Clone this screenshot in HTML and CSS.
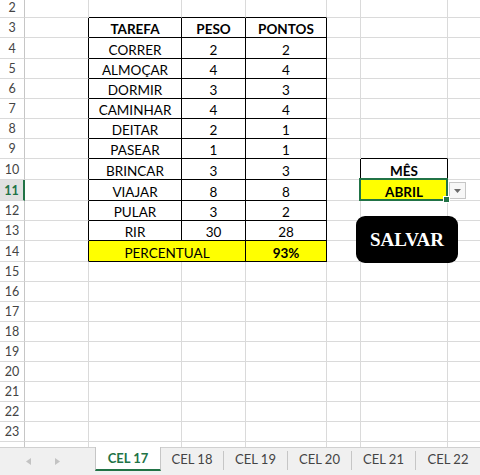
FILE: index.html
```html
<!DOCTYPE html>
<html lang="pt">
<head>
<meta charset="utf-8">
<title>CEL 17</title>
<link rel="stylesheet" href="styles.css">
</head>
<body>
<div class="app">
  <div class="sheet">
    <div class="row r18"><div class="rh">2</div><div class="c"></div><div class="c kb"></div><div class="c kb"></div><div class="c kb"></div><div class="c"></div><div class="c"></div><div class="c"></div></div>
    <div class="row r20"><div class="rh">3</div><div class="c kr"></div><div class="c k b">TAREFA</div><div class="c k b">PESO</div><div class="c k b">PONTOS</div><div class="c"></div><div class="c"></div><div class="c"></div></div>
    <div class="row r21"><div class="rh">4</div><div class="c kr"></div><div class="c k">CORRER</div><div class="c k">2</div><div class="c k">2</div><div class="c"></div><div class="c"></div><div class="c"></div></div>
    <div class="row r20"><div class="rh">5</div><div class="c kr"></div><div class="c k">ALMOÇAR</div><div class="c k">4</div><div class="c k">4</div><div class="c"></div><div class="c"></div><div class="c"></div></div>
    <div class="row r20"><div class="rh">6</div><div class="c kr"></div><div class="c k">DORMIR</div><div class="c k">3</div><div class="c k">3</div><div class="c"></div><div class="c"></div><div class="c"></div></div>
    <div class="row r20"><div class="rh">7</div><div class="c kr"></div><div class="c k">CAMINHAR</div><div class="c k">4</div><div class="c k">4</div><div class="c"></div><div class="c"></div><div class="c"></div></div>
    <div class="row r20"><div class="rh">8</div><div class="c kr"></div><div class="c k">DEITAR</div><div class="c k">2</div><div class="c k">1</div><div class="c"></div><div class="c"></div><div class="c"></div></div>
    <div class="row r20"><div class="rh">9</div><div class="c kr"></div><div class="c k">PASEAR</div><div class="c k">1</div><div class="c k">1</div><div class="c"></div><div class="c kb"></div><div class="c"></div></div>
    <div class="row r21"><div class="rh">10</div><div class="c kr"></div><div class="c k">BRINCAR</div><div class="c k">3</div><div class="c k">3</div><div class="c kr"></div><div class="c k b">MÊS</div><div class="c"></div></div>
    <div class="row r21"><div class="rh on">11</div><div class="c kr"></div><div class="c k">VIAJAR</div><div class="c k">8</div><div class="c k">8</div><div class="c kr"></div><div class="c k b y sel">ABRIL</div><div class="c"></div></div>
    <div class="row r20"><div class="rh">12</div><div class="c kr"></div><div class="c k">PULAR</div><div class="c k">3</div><div class="c k">2</div><div class="c"></div><div class="c"></div><div class="c"></div></div>
    <div class="row r20"><div class="rh">13</div><div class="c kr"></div><div class="c k">RIR</div><div class="c k">30</div><div class="c k">28</div><div class="c"></div><div class="c"></div><div class="c"></div></div>
    <div class="row r21"><div class="rh">14</div><div class="c kr"></div><div class="c k y span2">PERCENTUAL</div><div class="c k y b">93%</div><div class="c"></div><div class="c"></div><div class="c"></div></div>
    <div class="row r20"><div class="rh">15</div><div class="c"></div><div class="c"></div><div class="c"></div><div class="c"></div><div class="c"></div><div class="c"></div><div class="c"></div></div>
    <div class="row r20"><div class="rh">16</div><div class="c"></div><div class="c"></div><div class="c"></div><div class="c"></div><div class="c"></div><div class="c"></div><div class="c"></div></div>
    <div class="row r20"><div class="rh">17</div><div class="c"></div><div class="c"></div><div class="c"></div><div class="c"></div><div class="c"></div><div class="c"></div><div class="c"></div></div>
    <div class="row r20"><div class="rh">18</div><div class="c"></div><div class="c"></div><div class="c"></div><div class="c"></div><div class="c"></div><div class="c"></div><div class="c"></div></div>
    <div class="row r20"><div class="rh">19</div><div class="c"></div><div class="c"></div><div class="c"></div><div class="c"></div><div class="c"></div><div class="c"></div><div class="c"></div></div>
    <div class="row r20"><div class="rh">20</div><div class="c"></div><div class="c"></div><div class="c"></div><div class="c"></div><div class="c"></div><div class="c"></div><div class="c"></div></div>
    <div class="row r20"><div class="rh">21</div><div class="c"></div><div class="c"></div><div class="c"></div><div class="c"></div><div class="c"></div><div class="c"></div><div class="c"></div></div>
    <div class="row r20"><div class="rh">22</div><div class="c"></div><div class="c"></div><div class="c"></div><div class="c"></div><div class="c"></div><div class="c"></div><div class="c"></div></div>
    <div class="row r20"><div class="rh">23</div><div class="c"></div><div class="c"></div><div class="c"></div><div class="c"></div><div class="c"></div><div class="c"></div><div class="c"></div></div>
    <div class="row r20"><div class="rh"></div><div class="c"></div><div class="c"></div><div class="c"></div><div class="c"></div><div class="c"></div><div class="c"></div><div class="c"></div></div>

    <div class="dropdown"><svg width="7" height="4" viewBox="0 0 7 4"><path d="M0 0H7L3.5 4Z" fill="#6b6b6b"/></svg></div>
    <div class="salvar">SALVAR</div>
  </div>

  <div class="tabbar">
    <div class="nav">
      <svg class="arrow" width="5" height="7" viewBox="0 0 5 7"><path d="M5 0V7L0 3.5Z" fill="#c3c3c3"/></svg>
      <svg class="arrow" width="5" height="7" viewBox="0 0 5 7"><path d="M0 0V7L5 3.5Z" fill="#c3c3c3"/></svg>
    </div>
    <div class="tab active">CEL 17</div>
    <div class="tab first">CEL 18</div>
    <div class="tab">CEL 19</div>
    <div class="tab">CEL 20</div>
    <div class="tab">CEL 21</div>
    <div class="tab last">CEL 22</div>
  </div>
</div>
</body>
</html>
```

FILE: styles.css
```css
* { box-sizing: border-box; }
html, body { margin: 0; padding: 0; }
body {
  width: 480px;
  height: 475px;
  overflow: hidden;
  background: #fff;
  font-family: Lato, "Liberation Sans", sans-serif;
  color: #000;
}
.app { width: 480px; height: 475px; display: flex; flex-direction: column; }

.sheet {
  position: relative;
  height: 447px;
  overflow: hidden;
  flex: none;
}
.row {
  display: grid;
  grid-template-columns: 25px 64px 93px 64px 81px 34px 87px 32px;
}
.r18 { height: 18px; }
.r20 { height: 20px; }
.r21 { height: 21px; }

.rh {
  border-right: 1px solid #c6c6c6;
  border-bottom: 1px solid #dadada;
  color: #444;
  font-size: 12.5px;
  line-height: 12px;
  padding-bottom: 3px;
  display: flex;
  align-items: flex-end;
  justify-content: center;
}
.rh.on {
  background: #e1e1e1;
  color: #217346;
  font-weight: 700;
  border-right: 2px solid #217346;
}

.c {
  border-right: 1px solid #dadada;
  border-bottom: 1px solid #dadada;
  font-size: 13.5px;
  line-height: 13px;
  padding-bottom: 1px;
  display: flex;
  align-items: flex-end;
  justify-content: center;
  white-space: nowrap;
}
.row > .c:last-child { border-right: none; }
.c.kr { border-right-color: #000; }
.c.kb { border-bottom-color: #000; }
.c.k { border-right-color: #000; border-bottom-color: #000; }
.c.b { font-weight: 700; }
.c.y { background: #ffff00; }
.c.span2 { grid-column: span 2; }
.c.sel { position: relative; }
.c.sel::after {
  content: "";
  position: absolute;
  top: -2px; left: -2px; right: -1px; bottom: -1px;
  border: 2px solid #217346;
}
.c.sel::before {
  content: "";
  position: absolute;
  right: -2px; bottom: -2px;
  width: 5px; height: 5px;
  background: #217346;
  box-shadow: 0 0 0 1px #fff;
  z-index: 2;
}

.dropdown {
  position: absolute;
  left: 449px; top: 182px;
  width: 17px; height: 17px;
  border: 1px solid #c6c6c6;
  background: #f7f7f7;
  display: flex;
  align-items: center;
  justify-content: center;
}
.salvar {
  position: absolute;
  left: 356px; top: 216px;
  width: 102px; height: 47px;
  border-radius: 9px;
  background: #000;
  color: #fff;
  font-family: "Liberation Serif", serif;
  font-weight: 700;
  font-size: 19px;
  display: flex;
  align-items: center;
  justify-content: center;
  padding-top: 1px;
}

.tabbar {
  flex: 1;
  display: flex;
  align-items: flex-start;
  background: #f0f0f0;
  border-top: 1px solid #d0d0d0;
  font-size: 13px;
  color: #444;
}
.nav {
  width: 99px;
  height: 26px;
  display: flex;
  align-items: center;
  padding-left: 26px;
  gap: 24px;
}
.arrow { display: block; }
.tab {
  width: 64px;
  height: 19px;
  margin-top: 3px;
  border-right: 1px solid #c6c6c6;
  line-height: 16px;
  text-align: center;
  flex: none;
}
.tab.first { width: 63px; }
.tab.last { border-right: none; }
.tab.active {
  width: 66px;
  height: 24px;
  margin-top: -1px;
  background: #fff;
  border-left: 1px solid #c6c6c6;
  border-right: 1px solid #c6c6c6;
  border-bottom: 2px solid #217346;
  color: #217346;
  font-weight: 700;
  line-height: 23px;
}
```
